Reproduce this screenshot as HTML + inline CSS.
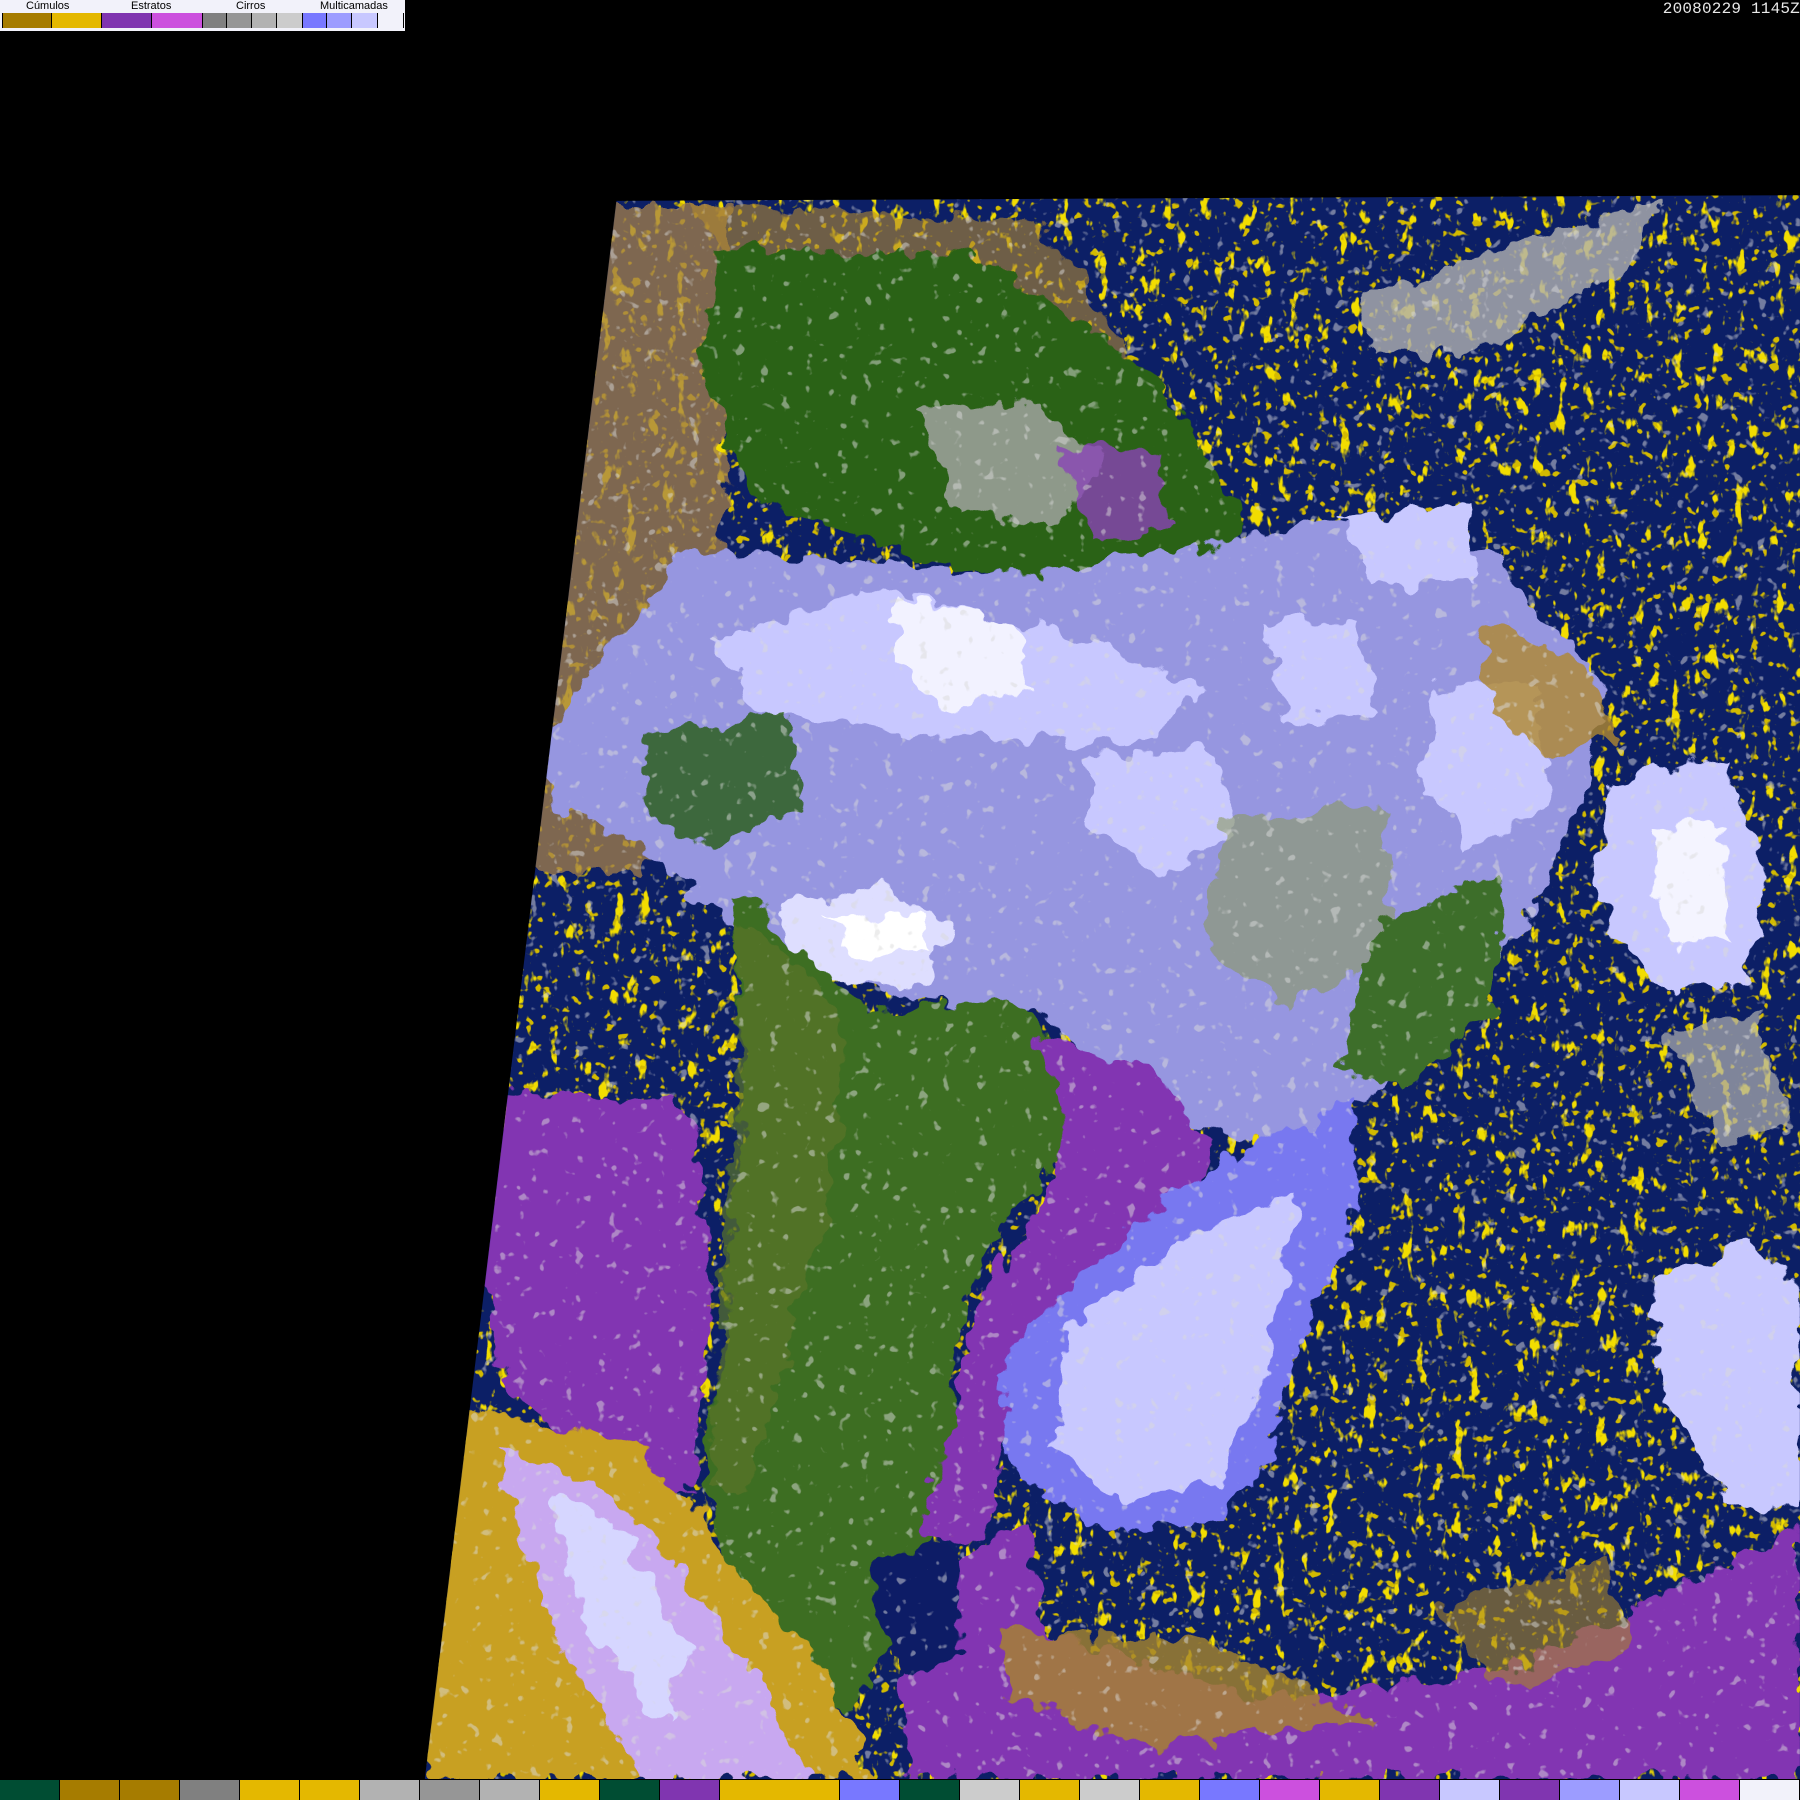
<!DOCTYPE html>
<html><head><meta charset="utf-8"><style>
html,body{margin:0;padding:0;background:#000;width:1800px;height:1800px;overflow:hidden;position:relative}
#map{position:absolute;left:0;top:0}
#leg{position:absolute;left:0;top:0;width:405px;height:31px;background:#f2f2fa}
#leg .t{position:absolute;top:0;font:11px "Liberation Sans",sans-serif;color:#000}
#leg .s{position:absolute;top:13px;height:15px;border-left:1px solid #000}
#ts{position:absolute;right:0;top:0;font:16px "Liberation Mono",monospace;color:#e8e8e8;letter-spacing:0.2px}
#bar{position:absolute;left:0;top:1779px;width:1800px;height:21px;background:#000;display:flex}
#bar div{width:59px;height:20px;margin-top:1px;border-right:1px solid #000;flex:none}
</style></head><body>
<svg id="map" width="1800" height="1800" viewBox="0 0 1568 1568">
<defs>
<clipPath id="cp"><polygon points="537,175 1568,170 1568,1550 370,1550"/></clipPath>
<filter id="sp" x="0" y="0" width="100%" height="100%"><feTurbulence type="fractalNoise" baseFrequency="0.09 0.05" numOctaves="3" seed="4"/><feColorMatrix type="matrix" values="0 0 0 0 0.89  0 0 0 0 0.72  0 0 0 0 0.0  12 0 0 0 -7.7"/></filter>
<filter id="sp2" x="0" y="0" width="100%" height="100%"><feTurbulence type="fractalNoise" baseFrequency="0.12" numOctaves="2" seed="9"/><feColorMatrix type="matrix" values="0 0 0 0 0.65  0 0 0 0 0.49  0 0 0 0 0.0  0 12 0 0 -7.8"/></filter>
<filter id="sp3" x="0" y="0" width="100%" height="100%"><feTurbulence type="fractalNoise" baseFrequency="0.1" numOctaves="2" seed="17"/><feColorMatrix type="matrix" values="0 0 0 0 0.7  0 0 0 0 0.7  0 0 0 0 0.7  0 0 12 0 -8"/></filter>
<filter id="rough"><feTurbulence type="fractalNoise" baseFrequency="0.04" numOctaves="3" seed="2"/><feDisplacementMap in="SourceGraphic" scale="30" xChannelSelector="R" yChannelSelector="G"/></filter>
</defs>
<g clip-path="url(#cp)">
<rect x="0" y="0" width="1568" height="1568" fill="#0c1f66"/>
<rect x="0" y="0" width="1568" height="1568" filter="url(#sp)"/>
<rect x="0" y="0" width="1568" height="1568" filter="url(#sp2)"/>
<g filter="url(#rough)">
<path d="M500,180 L640,180 L620,700 L560,760 L460,760 L480,400Z" fill="#a4804a" opacity="0.75"/>
<path d="M600,180 L900,190 L980,300 L1000,380 L900,390 L700,300Z" fill="#b08830" opacity="0.6"/>
<path d="M625,215 L850,225 L1000,320 L1090,460 L1000,520 L820,490 L660,440 L615,330Z" fill="#2a6218"/>
<path d="M800,360 L900,350 L960,400 L920,460 L830,440Z" fill="#a8a8a8" opacity="0.8"/>
<path d="M920,390 L1010,390 L1020,460 L950,470Z" fill="#8a45b5" opacity="0.8"/>
<path d="M470,640 L600,480 L900,500 L1200,450 L1300,480 L1400,600 L1380,700 L1330,800 L1250,900 L1190,960 L1100,1000 L1000,960 L900,880 L800,870 L700,840 L620,790 L560,740 L480,700Z" fill="#9696e0"/>
<path d="M620,560 L760,510 L950,560 L1050,600 L980,650 L800,640 L660,620Z" fill="#c8c8ff"/>
<path d="M780,520 L880,540 L900,600 L820,620 L780,580Z" fill="#f2f2ff"/>
<path d="M950,660 L1050,650 L1080,720 L1010,760 L950,730Z" fill="#c8c8ff"/>
<path d="M1100,540 L1180,540 L1200,620 L1120,630Z" fill="#c8c8ff"/>
<path d="M1250,600 L1340,590 L1350,700 L1280,740 L1240,680Z" fill="#c8c8ff"/>
<path d="M680,790 L770,770 L830,810 L800,860 L700,850Z" fill="#dedeff"/>
<path d="M720,800 L800,795 L815,830 L740,835Z" fill="#ffffff"/>
<path d="M1170,450 L1280,440 L1290,510 L1190,510Z" fill="#c8c8ff"/>
<path d="M1060,720 L1200,700 L1220,820 L1120,880 L1050,820Z" fill="#8a9a60" opacity="0.6"/>
<path d="M560,640 L680,620 L700,700 L620,740 L560,700Z" fill="#2f6020" opacity="0.85"/>
<path d="M1200,800 L1310,760 L1300,880 L1220,950 L1170,930Z" fill="#3e6e2a"/>
<path d="M1290,540 L1380,580 L1410,640 L1350,660 L1300,620Z" fill="#b08830" opacity="0.8"/>
<path d="M640,780 L700,830 L760,880 L880,870 L940,930 L930,1000 L880,1060 L840,1130 L830,1200 L840,1280 L820,1340 L770,1370 L780,1420 L740,1490 L690,1430 L640,1380 L610,1290 L630,1180 L640,1050 L650,930 L640,860Z" fill="#3e6e24"/>
<path d="M640,800 L700,840 L740,900 L720,1050 L680,1200 L650,1300 L620,1290 L630,1100 L645,900Z" fill="#5a7428" opacity="0.7"/>
<path d="M900,900 L1000,930 L1060,1000 L1020,1100 L940,1150 L880,1250 L850,1340 L800,1330 L830,1250 L850,1140 L900,1060 L930,980Z" fill="#8236b2"/>
<path d="M900,1150 L1000,1060 L1090,1000 L1180,960 L1180,1060 L1130,1180 L1100,1280 L1050,1330 L950,1330 L880,1280 L870,1200Z" fill="#7878f0"/>
<path d="M930,1160 L1030,1080 L1130,1040 L1110,1180 L1060,1290 L980,1310 L920,1260Z" fill="#c8c8ff"/>
<path d="M435,950 L600,960 L620,1150 L600,1300 L540,1300 L440,1200 L420,1100Z" fill="#8236b2"/>
<path d="M380,1220 L560,1260 L650,1380 L720,1450 L760,1550 L370,1550Z" fill="#c8a020"/>
<path d="M430,1260 L520,1290 L600,1380 L660,1460 L700,1550 L560,1550 L480,1420Z" fill="#c8a8f0"/>
<path d="M480,1300 L540,1330 L600,1440 L580,1500 L510,1420Z" fill="#d6d6ff"/>
<path d="M780,1380 L900,1330 L910,1420 L1100,1480 L1300,1460 L1568,1330 L1568,1550 L790,1550Z" fill="#8236b2"/>
<path d="M870,1420 L1050,1430 L1200,1500 L1000,1520 L880,1480Z" fill="#a8862a" opacity="0.8"/>
<path d="M1250,1400 L1400,1360 L1420,1440 L1300,1470Z" fill="#a8862a" opacity="0.6"/>
<path d="M760,1360 L830,1340 L840,1440 L780,1460Z" fill="#0c1f66"/>
<path d="M1400,680 L1500,660 L1540,760 L1520,860 L1440,860 L1390,780Z" fill="#c8c8ff"/>
<path d="M1440,720 L1500,720 L1510,820 L1450,820Z" fill="#f4f4ff"/>
<path d="M1440,1120 L1530,1080 L1568,1120 L1568,1320 L1500,1300 L1450,1220Z" fill="#c8c8ff"/>
<path d="M1180,260 L1300,220 L1450,175 L1420,230 L1300,300 L1200,310Z" fill="#b0b0b0" opacity="0.8"/>
<path d="M1450,900 L1530,880 L1560,980 L1500,1000Z" fill="#b0b0b0" opacity="0.7"/>
</g>
<rect x="0" y="0" width="1568" height="1568" filter="url(#sp3)" opacity="0.5"/>
</g>
</svg>
<div id="leg">
<span class="t" style="left:26px">Cúmulos</span>
<span class="t" style="left:131px">Estratos</span>
<span class="t" style="left:236px">Cirros</span>
<span class="t" style="left:320px">Multicamadas</span>
<div class="s" style="left:2px;width:48px;background:#a67c00"></div>
<div class="s" style="left:51px;width:49px;background:#e4b800"></div>
<div class="s" style="left:101px;width:49px;background:#8035b0"></div>
<div class="s" style="left:151px;width:50px;background:#cc50de"></div>
<div class="s" style="left:202px;width:23px;background:#808080"></div>
<div class="s" style="left:226px;width:24px;background:#969696"></div>
<div class="s" style="left:251px;width:24px;background:#b2b2b2"></div>
<div class="s" style="left:276px;width:25px;background:#cccccc"></div>
<div class="s" style="left:302px;width:23px;background:#7878ff"></div>
<div class="s" style="left:326px;width:24px;background:#9c9cff"></div>
<div class="s" style="left:351px;width:25px;background:#c8c8ff"></div>
<div class="s" style="left:377px;width:25px;background:#f2f2fa;border-right:1px solid #000"></div>
</div>
<div id="ts">20080229 1145Z</div>
<div id="bar">
<div style="background:#004d33"></div><div style="background:#a67c00"></div><div style="background:#a67c00"></div><div style="background:#808080"></div><div style="background:#e4b800"></div><div style="background:#e4b800"></div><div style="background:#b2b2b2"></div><div style="background:#969696"></div><div style="background:#b2b2b2"></div><div style="background:#e4b800"></div><div style="background:#004d33"></div><div style="background:#8035b0"></div><div style="background:#e4b800;border-right-color:#e4b800"></div><div style="background:#e4b800"></div><div style="background:#7878ff"></div><div style="background:#004d33"></div><div style="background:#cccccc"></div><div style="background:#e4b800"></div><div style="background:#cccccc"></div><div style="background:#e4b800"></div><div style="background:#7878ff"></div><div style="background:#cc50de"></div><div style="background:#e4b800"></div><div style="background:#8035b0"></div><div style="background:#c8c8ff"></div><div style="background:#8035b0"></div><div style="background:#9c9cff"></div><div style="background:#c8c8ff"></div><div style="background:#cc50de"></div><div style="background:#f2f2fa"></div>
</div>
</body></html>
